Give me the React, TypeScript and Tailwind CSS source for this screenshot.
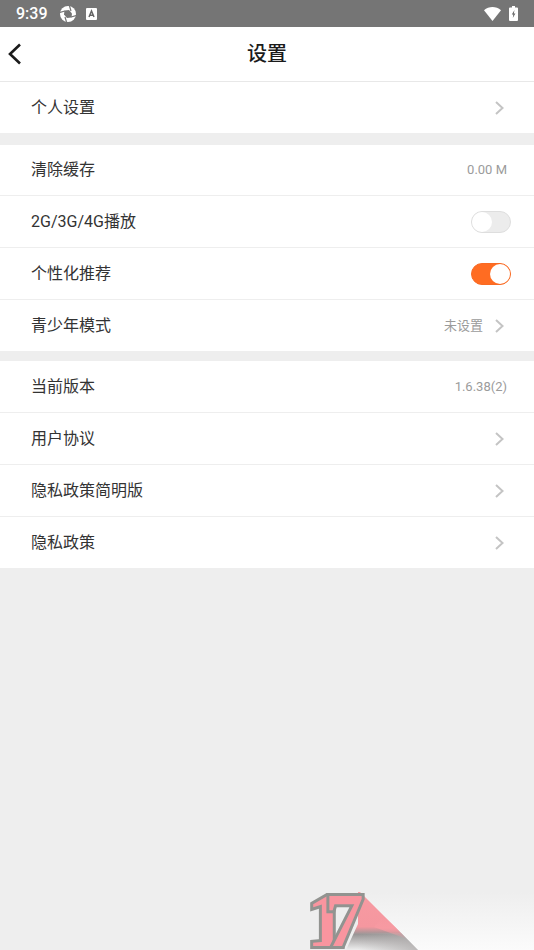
import { useState, type ReactNode } from "react";

function StatusBar() {
  return (
    <div className="flex h-[27px] items-center bg-[#757575] px-4 text-white">
      <span className="text-base font-medium leading-none">9:39</span>

      <svg className="ml-3 size-4" viewBox="0 0 16 16" aria-hidden="true">
        <circle cx="8" cy="8" r="8" fill="#fff" />
        <path d="M4.500 4.500 9 4 12 7.500 11.500 11.500 7 12 4 8.500Z" fill="#757575" />
        <path
          d="M0 6.500 5 5M9.500 0 11 5M16 9.500 11 11M6.500 16 5 11"
          stroke="#757575"
          strokeWidth="1.200"
        />
      </svg>

      <svg className="ml-[10px] h-3 w-[11px]" viewBox="0 0 11 12" aria-hidden="true">
        <rect width="11" height="12" rx="1" fill="#fff" />
        <path d="M3 9 5.500 3 8 9M3.800 7.200h3.400" fill="none" stroke="#666" strokeWidth="1.500" />
      </svg>

      <svg className="ml-auto h-[14px] w-[17px]" viewBox="0 0 17 14" aria-hidden="true">
        <path d="M8.500 14 0 3.200C4.800-1 12.200-1 17 3.200Z" fill="#fff" />
      </svg>

      <svg className="ml-2 h-[15px] w-[9px]" viewBox="0 0 9 15" aria-hidden="true">
        <path d="M3 0h3v1.500h2q1 0 1 1V14q0 1-1 1H1q-1 0-1-1V2.500q0-1 1-1h2Z" fill="#fff" />
        <path d="M5.500 4 2.800 8.500h1.500L3.800 12l2.600-4.600H4.800Z" fill="#666" />
      </svg>
    </div>
  );
}

function Chevron() {
  return (
    <svg className="ml-3 mr-[7px] h-[14px] w-[9px]" viewBox="0 0 9 14" fill="none" aria-hidden="true">
      <path d="M1 1 7.500 7 1 13" stroke="#c4c4c4" strokeWidth="2" />
    </svg>
  );
}

const rowClass =
  "flex w-full items-center bg-white pl-[31px] pr-[23px] text-left text-base text-[#333]";

function Value({ children }: { children: ReactNode }) {
  return <span className="ml-auto mr-1 text-[13px] text-[#9b9b9b]">{children}</span>;
}

function LinkRow({ label, value }: { label: string; value?: string }) {
  return (
    <button type="button" className={`${rowClass} h-[51px]`}>
      <span className="flex-1">{label}</span>
      {value && <span className="text-[13px] text-[#9b9b9b]">{value}</span>}
      <Chevron />
    </button>
  );
}

function SwitchRow({ id, label, on }: { id: string; label: string; on: boolean }) {
  const [checked, setChecked] = useState(on);

  return (
    <div className={`${rowClass} h-[51px]`}>
      <label htmlFor={id} className="flex-1">
        {label}
      </label>
      <input
        id={id}
        type="checkbox"
        role="switch"
        checked={checked}
        onChange={(e) => setChecked(e.target.checked)}
        className="flex h-[22px] w-10 appearance-none items-center rounded-full border border-[#dedede] bg-[#ececec] before:size-5 before:rounded-full before:bg-white checked:justify-end checked:border-[#f96a23] checked:bg-[#ff6c22]"
      />
    </div>
  );
}

function Watermark() {
  return (
    <svg className="h-[62px] w-[234px]" viewBox="0 0 234 62" role="img" aria-label="17">
      <defs>
        <linearGradient id="glow" x1="0" y1="0" x2="0" y2="1">
          <stop offset="0" stopColor="#eeeeee" />
          <stop offset="1" stopColor="#fbfbfb" />
        </linearGradient>
        <linearGradient id="shade" x1="0" y1="0" x2="0" y2="1">
          <stop offset="0" stopColor="#f79aa2" />
          <stop offset=".6" stopColor="#f5979f" />
          <stop offset=".73" stopColor="#999696" />
          <stop offset="1" stopColor="#eeeeee" />
        </linearGradient>
        <linearGradient id="edge" x1="0" y1="0" x2="1" y2="0">
          <stop offset="0" stopColor="#b0adad" stopOpacity="0" />
          <stop offset="1" stopColor="#b0adad" stopOpacity=".8" />
        </linearGradient>
        <linearGradient id="rim" x1="0" y1="0" x2="0" y2="1">
          <stop offset="0" stopColor="#f79aa2" stopOpacity="0" />
          <stop offset=".5" stopColor="#f79aa2" />
          <stop offset="1" stopColor="#f79aa2" stopOpacity="0" />
        </linearGradient>
      </defs>
      <path d="M60 4H234V62H118Z" fill="url(#glow)" />
      <path d="M60 4 118 62H46L58 36V4Z" fill="url(#shade)" />
      <path d="M58 45H101L118 62H58Z" fill="url(#edge)" />
      <path d="M84 28 107 51 74 39Z" fill="url(#rim)" />
      <text
        x="7 25"
        y="58"
        fill="#f9959f"
        stroke="#929390"
        strokeWidth="6"
        paintOrder="stroke"
        fontSize="77"
        fontWeight="700"
        fontFamily="Liberation Serif, serif"
      >
        17
      </text>
    </svg>
  );
}

export default function App() {
  return (
    <div className="flex min-h-screen flex-col bg-[#eee] font-[Roboto,'Noto_Sans_CJK_SC',sans-serif]">
      <StatusBar />

      <header className="grid h-[55px] grid-cols-[40px_1fr_40px] items-center border-b border-[#e8e8e8] bg-white">
        <button type="button" aria-label="返回" className="flex h-full items-center pl-2">
          <svg className="h-[22px] w-[14px]" viewBox="0 0 14 22" fill="none" aria-hidden="true">
            <path d="M12 1.500 2 11 12 20.500" stroke="#1b1b1b" strokeWidth="2.600" />
          </svg>
        </button>
        <h1 className="text-center text-xl font-medium text-[#1b1b1b]">设置</h1>
      </header>

      <main className="flex flex-col">
        <LinkRow label="个人设置" />

        <section className="mt-3 flex flex-col gap-px">
          <div className={`${rowClass} h-[50px]`}>
            清除缓存
            <Value>0.00 M</Value>
          </div>
          <SwitchRow id="mobile-play" label="2G/3G/4G播放" on={false} />
          <SwitchRow id="recommend" label="个性化推荐" on={true} />
          <LinkRow label="青少年模式" value="未设置" />
        </section>

        <section className="mt-[10px] flex flex-col gap-px">
          <div className={`${rowClass} h-[51px]`}>
            当前版本
            <Value>1.6.38(2)</Value>
          </div>
          <LinkRow label="用户协议" />
          <LinkRow label="隐私政策简明版" />
          <LinkRow label="隐私政策" />
        </section>
      </main>

      <footer className="mt-auto flex justify-end">
        <Watermark />
      </footer>
    </div>
  );
}
